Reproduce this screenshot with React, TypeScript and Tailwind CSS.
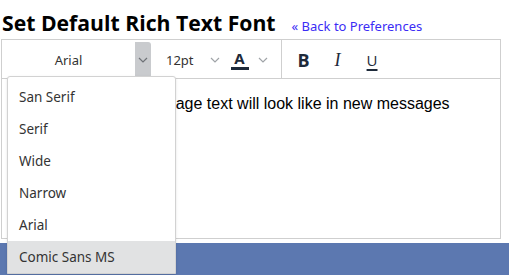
import React from "react";

const Chevron = ({ className = "" }: { className?: string }) => (
  <svg width="10" height="6" viewBox="0 0 10 6" className={className}>
    <path d="M1 1 L5 5 L9 1" fill="none" stroke="currentColor" strokeWidth="1.2" />
  </svg>
);

export default function App() {
  const items = ["San Serif", "Serif", "Wide", "Narrow", "Arial", "Comic Sans MS"];
  return (
    <div className="relative h-[275px] w-[509px] overflow-hidden bg-white" style={{ fontFamily: '"Noto Sans", "Open Sans", sans-serif' }}>
      <div className="flex items-baseline pl-[2px] pt-[9px] h-[39px]">
        <h1 className="text-[21.2px] font-bold leading-[28px] text-black" style={{ fontFamily: '"Open Sans", sans-serif' }}>
          Set Default Rich Text Font
        </h1>
        <a className="ml-[16px] text-[13px] text-[#3b2cf5]">« Back to Preferences</a>
      </div>
      <div className="ml-[1px] w-[500px] border border-[#cfcfcf]">
        <div className="flex h-[39px] items-stretch border-b border-[#cfcfcf]">
          <div className="flex w-[149px] items-stretch pt-[2px]">
            <div className="flex flex-1 items-center justify-center text-[13px] text-[#333] pt-[1px]">Arial</div>
            <div className="flex w-[16px] items-center justify-center rounded-r-[3px] bg-[#c9cbce] text-[#6e7277]">
              <Chevron />
            </div>
          </div>
          <div className="flex items-center pl-[15px] pt-[3px] text-[13px] text-[#333]">12pt</div>
          <div className="flex items-center pl-[16px] pt-[2px] text-[#a0a4a8]"><Chevron /></div>
          <div className="flex flex-col items-center justify-center pl-[11px] pt-[2px]">
            <span className="text-[15px] font-bold leading-[17px] text-[#1e2a3a]">A</span>
            <span className="h-[3px] w-[18px] bg-[#1e2a3a]" />
          </div>
          <div className="flex items-center pl-[9px] pr-[13px] pt-[2px] text-[#a0a4a8]"><Chevron /></div>
          <div className="flex items-center border-l border-[#cfcfcf] pl-[16px] pt-[2px]">
            <span className="w-[12px] text-[18px] font-bold text-[#1e2a3a]" style={{ fontFamily: '"Open Sans", sans-serif' }}>B</span>
            <span className="ml-[25px] text-[18px] italic text-[#1e2a3a]" style={{ fontFamily: '"Liberation Serif", serif' }}>I</span>
            <span className="ml-[26px] text-[15px] underline underline-offset-[3px] decoration-[1.5px] font-medium text-[#1e2a3a]" style={{ fontFamily: '"Open Sans", sans-serif' }}>U</span>
          </div>
        </div>
        <div className="h-[159px] px-[11px] pt-[13px] text-[16px] text-black" style={{ fontFamily: '"Liberation Sans", Arial, sans-serif' }}>
          This is what your message text will look like in new messages
        </div>
      </div>
      <div className="mt-[4px] h-[40px] w-full bg-[#5c78b0]" />
      <div className="absolute left-[7px] top-[76px] w-[169px] rounded-t-[3px] border border-[#d2d2d2] bg-white pt-[4px] shadow-sm">
        {items.map((it, i) => (
          <div
            key={it}
            className={`flex h-[32px] items-center pl-[11px] text-[13.5px] text-[#333] ${i === 5 ? "bg-[#e1e2e3]" : ""}`}
          >
            {it}
          </div>
        ))}
      </div>
    </div>
  );
}
